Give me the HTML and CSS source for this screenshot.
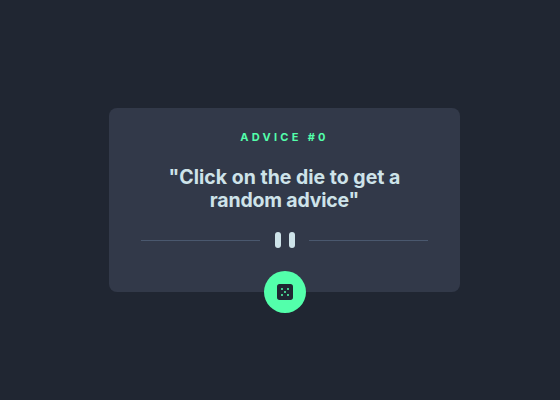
FILE: index.html
```html
<!DOCTYPE html>
<html lang="en">
<head>
<meta charset="utf-8">
<title>Advice generator</title>
<link rel="stylesheet" href="styles.css">
</head>
<body>
<main class="card">
  <h1 class="label">ADVICE #0</h1>
  <p class="quote">"Click on the die to get a<br><span class="tight">random advice"</span></p>
  <svg class="divider" width="287" height="16" viewBox="0 0 287 16" aria-hidden="true">
    <path fill="#4A586E" d="M0 8h119v1H0zM168 8h119v1H168z"/>
    <rect x="134" width="6" height="16" rx="3" fill="#CEE3E9"/>
    <rect x="148" width="6" height="16" rx="3" fill="#CEE3E9"/>
  </svg>
  <button class="dice" aria-label="New advice">
    <svg width="16" height="16" viewBox="0 0 24 24"><path fill="#202733" d="M20 0H4a4.005 4.005 0 0 0-4 4v16a4.005 4.005 0 0 0 4 4h16a4.005 4.005 0 0 0 4-4V4a4.005 4.005 0 0 0-4-4ZM7.500 18a1.500 1.500 0 1 1 0-3 1.500 1.500 0 0 1 0 3Zm0-9a1.500 1.500 0 1 1 0-3 1.500 1.500 0 0 1 0 3Zm4.500 4.500a1.500 1.500 0 1 1 0-3 1.500 1.500 0 0 1 0 3Zm4.500 4.500a1.500 1.500 0 1 1 0-3 1.500 1.500 0 0 1 0 3Zm0-9a1.500 1.500 0 1 1 0-3 1.500 1.500 0 0 1 0 3Z"/></svg>
  </button>
</main>
</body>
</html>
```
FILE: styles.css
```css
* { box-sizing: border-box; }
body {
  margin: 0;
  min-height: 400px;
  display: flex;
  justify-content: center;
  align-items: center;
  padding-left: 9px;
  background: #202632;
  font-family: Inter, sans-serif;
}
.card {
  position: relative;
  width: 351px;
  height: 184px;
  display: flex;
  flex-direction: column;
  align-items: center;
  padding-top: 22px;
  border-radius: 8px;
  background: #323949;
}
.label {
  margin: 0;
  font-size: 11px;
  line-height: 15px;
  font-weight: 700;
  letter-spacing: 3.3px;
  color: #53ffab;
}
.quote {
  margin: 21px 0 0;
  font-size: 19.5px;
  line-height: 23px;
  font-weight: 700;
  letter-spacing: 0;
  text-align: center;
  white-space: nowrap;
  color: #cee3e9;
}
.tight { letter-spacing: -0.2px; }
.divider { margin-top: 20px; }
.dice {
  position: absolute;
  left: 154.500px;
  bottom: -21px;
  width: 42px;
  height: 42px;
  display: flex;
  align-items: center;
  justify-content: center;
  padding: 0;
  border: 0;
  border-radius: 50%;
  background: #53ffab;
}
```
